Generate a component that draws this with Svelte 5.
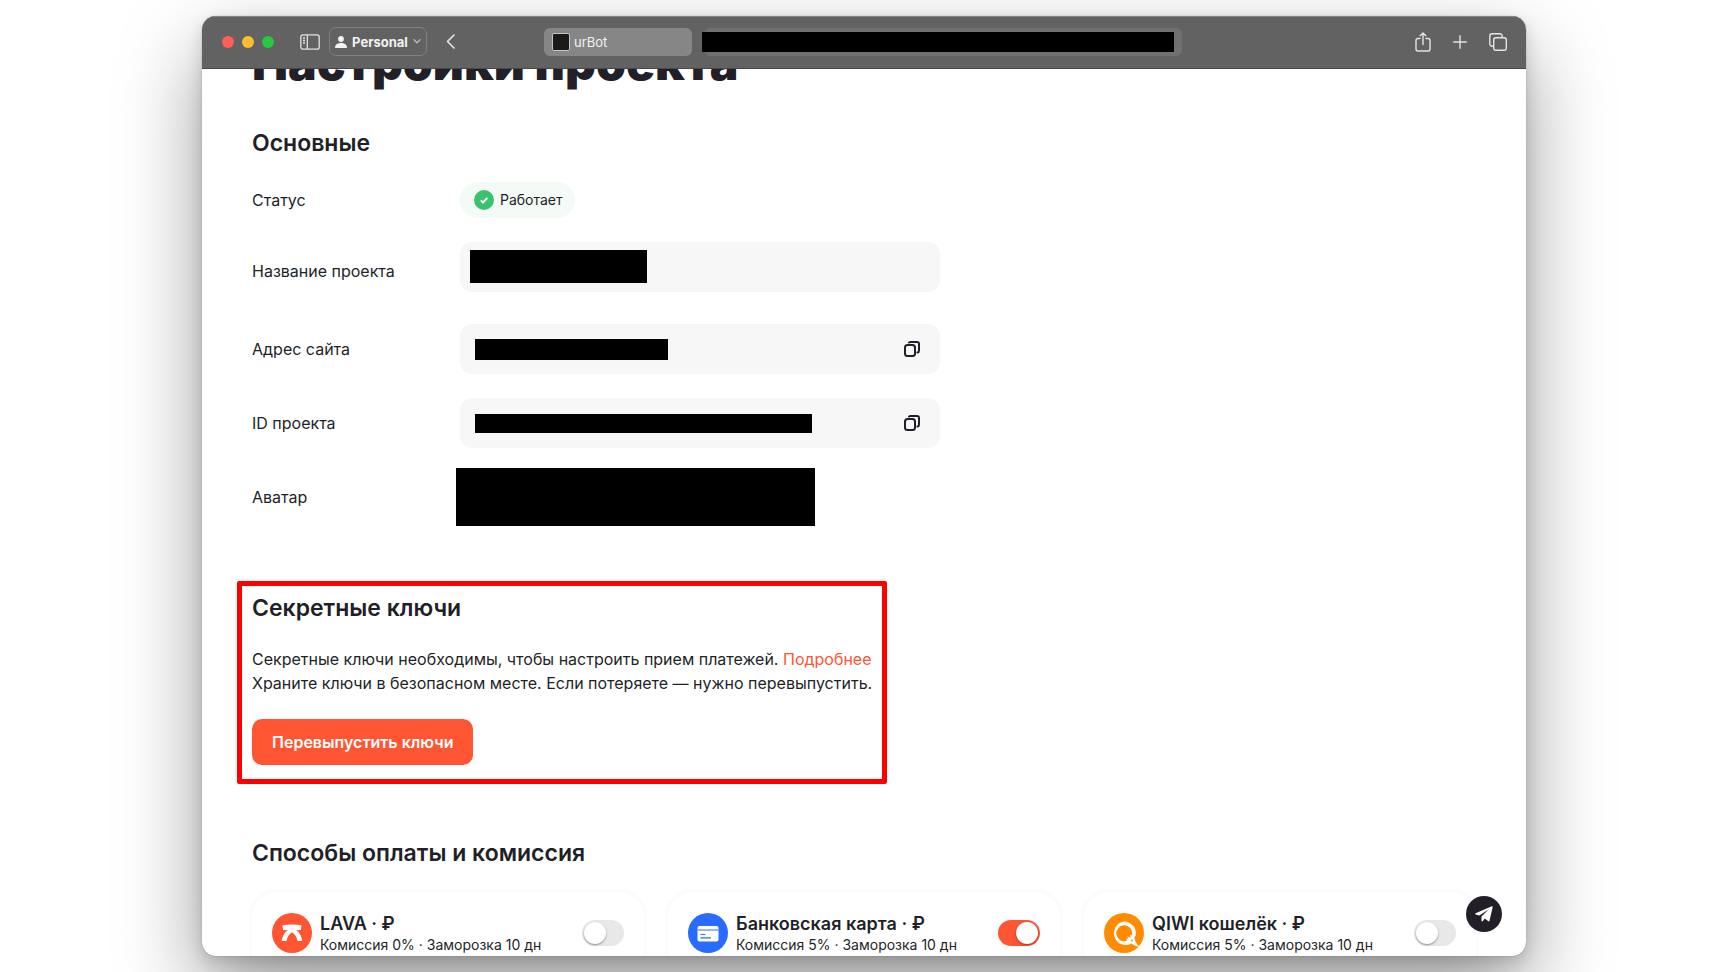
<script lang="ts">
  type Method = {
    id: string;
    title: string;
    fee: number;
    days: number;
    color: string;
    enabled: boolean;
  };

  let methods: Method[] = $state([
    { id: "lava", title: "LAVA · ₽", fee: 0, days: 10, color: "#ff5533", enabled: false },
    { id: "card", title: "Банковская карта · ₽", fee: 5, days: 10, color: "#2a6bff", enabled: true },
    { id: "qiwi", title: "QIWI кошелёк · ₽", fee: 5, days: 10, color: "#ff8c00", enabled: false },
  ]);
</script>

{#snippet copyIcon()}
  <svg width="18" height="18" viewBox="0 0 18 18" fill="none" stroke="currentColor" stroke-width="2">
    <rect x="2" y="5" width="10" height="11" rx="2.500" />
    <path d="M6 2.6c.4-.4.9-.6 1.500-.6H14a2 2 0 0 1 2 2v6.500c0 1-.6 1.900-1.600 2.100" stroke-linecap="round" />
  </svg>
{/snippet}

<div class="desktop">
  <div class="window">
    <header class="toolbar">
      <div class="left">
        <div class="lights">
          <button type="button" class="light close" aria-label="Close"></button>
          <button type="button" class="light minimize" aria-label="Minimize"></button>
          <button type="button" class="light zoom" aria-label="Zoom"></button>
        </div>
        <button type="button" class="tool sidebar" aria-label="Sidebar">
          <svg width="20" height="16" viewBox="0 0 20 16" fill="none" stroke="currentColor" stroke-width="1.300">
            <rect x=".8" y=".8" width="18.400" height="14.400" rx="2.200" />
            <path d="M7.300 1v14M3 4h2M3 6.500h2M3 9h2" />
          </svg>
        </button>
        <button type="button" class="profile">
          <svg width="12" height="12" viewBox="0 0 12 12" fill="currentColor">
            <circle cx="6" cy="3" r="2.900" />
            <path d="M.5 12c-.4 0-.5-.4-.5-.8C.2 8.600 2.700 7 6 7s5.800 1.600 6 4.200c0 .4-.1.8-.5.8z" />
          </svg>
          <span>Personal</span>
          <svg class="dim" width="8" height="5" viewBox="0 0 8 5" fill="none" stroke="currentColor" stroke-width="1.300" stroke-linecap="round">
            <path d="M1 .8l3 3 3-3" />
          </svg>
        </button>
        <button type="button" class="tool" aria-label="Back">
          <svg width="9" height="15" viewBox="0 0 9 15" fill="none" stroke="currentColor" stroke-width="1.600" stroke-linecap="round" stroke-linejoin="round">
            <path d="M8 1L1.500 7.500 8 14" />
          </svg>
        </button>
      </div>
      <div class="tabs">
        <button type="button" class="tab">
          <span class="favicon"></span>
          <span>urBot</span>
        </button>
        <div class="address"><span class="redacted"></span></div>
      </div>
      <div class="right">
        <button type="button" class="tool" aria-label="Share">
          <svg width="16" height="20" viewBox="0 0 16 20" fill="none" stroke="currentColor" stroke-width="1.400" stroke-linecap="round" stroke-linejoin="round">
            <path d="M5 6.500H3a2 2 0 0 0-2 2V17a2 2 0 0 0 2 2h10a2 2 0 0 0 2-2V8.500a2 2 0 0 0-2-2h-2M8 12.500V1.200M5.200 3.800L8 1l2.800 2.800" />
          </svg>
        </button>
        <button type="button" class="tool" aria-label="New tab">
          <svg width="14" height="14" viewBox="0 0 14 14" fill="none" stroke="currentColor" stroke-width="1.400" stroke-linecap="round">
            <path d="M7 .8v12.400M.8 7h12.400" />
          </svg>
        </button>
        <button type="button" class="tool" aria-label="Tab overview">
          <svg width="18" height="18" viewBox="0 0 18 18" fill="none" stroke="currentColor" stroke-width="1.400">
            <rect x="4.700" y="4.700" width="12.600" height="12.600" rx="2.200" />
            <path d="M4.500 13.200H3a2.200 2.200 0 0 1-2.200-2.200V3A2.200 2.200 0 0 1 3 .8h8A2.200 2.200 0 0 1 13.200 3v1.500" />
          </svg>
        </button>
      </div>
    </header>

    <main>
      <h1>Настройки проекта</h1>

      <section>
        <h2>Основные</h2>
        <div class="rows">
          <div class="row">
            <span class="label">Статус</span>
            <span class="status">
              <svg width="20" height="20" viewBox="0 0 20 20" fill="none">
                <circle cx="10" cy="10" r="10" fill="#3ac26e" />
                <path d="M6.800 10.400l2.200 2.100 4.300-4.600" stroke="#fff" stroke-width="2" />
              </svg>
              Работает
            </span>
          </div>
          <div class="row name">
            <label class="label" for="project-name">Название проекта</label>
            <div class="field">
              <input id="project-name" type="text" />
              <span class="mask mask-name"></span>
            </div>
          </div>
          <div class="row">
            <label class="label" for="project-url">Адрес сайта</label>
            <div class="field">
              <input id="project-url" type="text" readonly />
              <span class="mask mask-url"></span>
              <button type="button" class="copy" aria-label="Скопировать адрес">{@render copyIcon()}</button>
            </div>
          </div>
          <div class="row">
            <label class="label" for="project-id">ID проекта</label>
            <div class="field">
              <input id="project-id" type="text" readonly />
              <span class="mask mask-id"></span>
              <button type="button" class="copy" aria-label="Скопировать ID">{@render copyIcon()}</button>
            </div>
          </div>
          <div class="row avatar">
            <span class="label">Аватар</span>
            <div class="avatar-mask"></div>
          </div>
        </div>
      </section>

      <section class="keys">
        <h2>Секретные ключи</h2>
        <p>
          Секретные ключи необходимы, чтобы настроить прием платежей. <a href="#keys">Подробнее</a><br />
          Храните ключи в безопасном месте. Если потеряете — нужно перевыпустить.
        </p>
        <button type="button" class="primary">Перевыпустить ключи</button>
      </section>

      <section>
        <h2>Способы оплаты и комиссия</h2>
        <div class="methods">
          {#each methods as method (method.id)}
            <label class="card">
              <svg class="logo" width="40" height="40" viewBox="0 0 40 40">
                <circle cx="20" cy="20" r="20" fill={method.color} />
                {#if method.id === "lava"}
                  <path fill="#fff" d="M10.500 12.300c6.300-1.100 12.700-1.100 19 0l-.6 4.600-4.500.3c3.200 2.400 5.300 6.300 5.900 10.800h-4.800c-.6-3.700-2.400-6.600-5.500-8.800-3.100 2.200-4.900 5.100-5.500 8.800H9.700c.6-4.500 2.700-8.400 5.900-10.800l-4.500-.3z" />
                {:else if method.id === "card"}
                  <rect x="9.500" y="13" width="21" height="15.500" rx="2" fill="#fff" />
                  <path d="M9.500 17h21M12.500 21.500h5M12.500 24.800h10.500" stroke={method.color} stroke-width="1.200" />
                {:else}
                  <path fill="#fff" fill-rule="evenodd" d="M20 8.500a11.800 11.800 0 0 1 11.600 14.300l-1.400 1.600c1.400 4.800 3 7.100 4.300 8.300.6.7.1 1.200-.7.9-2.600-.8-4.600-2-6.200-3.200A11.800 11.800 0 1 1 20 8.500zM20 12.300a8 8 0 1 0 3.500 15.300l-1.800-2 2.800.7-1.200-2.700 3.400 1.200-.8-3.200 1.900.9A8 8 0 0 0 20 12.300z" />
                  <circle cx="28" cy="27.500" r="1" fill={method.color} />
                {/if}
              </svg>
              <span class="info">
                <strong>{method.title}</strong>
                <span>Комиссия {method.fee}% · Заморозка {method.days} дн</span>
              </span>
              <input type="checkbox" role="switch" bind:checked={method.enabled} />
            </label>
          {/each}
        </div>
      </section>
    </main>

    <a class="support" href="#support" aria-label="Telegram">
      <svg width="18" height="16" viewBox="0 0 18 16" fill="#fff">
        <path d="M16.800.2L.6 7.300c-.6.300-.6.900 0 1.100L4.300 9.600 13.500 3.500 6.500 10.500v4.300c0 .7.7.9 1.100.4l2.100-2.600 3.700 2.700c.5.3 1 .1 1.100-.5L17.700.9c.1-.6-.4-.9-.9-.7z" />
      </svg>
    </a>
  </div>
</div>

<style>
  :global(body) {
    background: #fff;
    overflow: hidden;
  }

  .desktop {
    --text: #221f28;
    --accent: #ff5533;
    --field: #f7f7f7;
    box-sizing: border-box;
    height: 100vh;
    padding: 16px 202px;
    color: var(--text);
    font-family: Inter, "Liberation Sans", sans-serif;
    font-size: 16px;
    line-height: 24px;
  }

  .window {
    position: relative;
    height: 100%;
    display: flex;
    flex-direction: column;
    border-radius: 14px;
    background: #fff;
    box-shadow: 0 0 1px rgba(0, 0, 0, 0.5), 0 6px 16px rgba(0, 0, 0, 0.15), 0 36px 84px rgba(0, 0, 0, 0.4);
    overflow: hidden;
  }

  button {
    padding: 0;
    border: 0;
    background: none;
    color: inherit;
    font: inherit;
    cursor: pointer;
  }

  svg {
    display: block;
    flex: none;
  }

  .toolbar {
    flex: none;
    box-sizing: border-box;
    height: 53px;
    display: grid;
    grid-template-columns: 342px minmax(0, 638px) 1fr;
    align-items: center;
    padding-bottom: 2px;
    border-top: 1px solid #858585;
    border-bottom: 1px solid #484848;
    background: #626262;
    color: #e4e4e4;
  }

  .left,
  .right,
  .lights,
  .tabs {
    display: flex;
    align-items: center;
  }

  .lights {
    gap: 8px;
    padding-left: 20px;
  }

  .light {
    width: 12px;
    height: 12px;
    border-radius: 50%;
  }

  .close {
    background: #ff5f57;
  }

  .minimize {
    background: #febc2e;
  }

  .zoom {
    background: #28c840;
  }

  .sidebar {
    margin-left: 26px;
  }

  .profile {
    box-sizing: border-box;
    width: 98px;
    height: 29px;
    margin: 0 19px 0 9px;
    display: flex;
    align-items: center;
    justify-content: center;
    gap: 5px;
    border: 1px solid #818181;
    border-radius: 7px;
    color: #f2f2f2;
    font-size: 13px;
    font-weight: 700;
    line-height: 16px;
  }

  .dim {
    opacity: 0.6;
  }

  .tabs {
    gap: 12px;
  }

  .tab {
    flex: none;
    width: 148px;
    height: 28px;
    display: flex;
    align-items: center;
    gap: 4px;
    padding: 0 8px;
    border-radius: 6px;
    background: #868686;
    color: #f2f2f2;
    font-size: 13px;
    line-height: 16px;
  }

  .favicon {
    box-sizing: border-box;
    width: 18px;
    height: 18px;
    border: 1px solid #c4c4c4;
    border-radius: 2px;
    background: #1a1a1a;
  }

  .address {
    flex: 1;
    height: 28px;
    display: flex;
    align-items: center;
    padding-right: 8px;
    border-radius: 6px;
    background: #707070;
  }

  .redacted {
    flex: 1;
    height: 20px;
    margin-left: -2px;
    background: #000;
  }

  .right {
    justify-content: flex-end;
    gap: 22px;
    padding-right: 19px;
  }

  main {
    flex: 1;
    min-height: 0;
    padding: 0 50px;
    overflow: hidden;
  }

  /* the page is scrolled, so the title is half under the toolbar */
  h1 {
    margin: -26px 0 44px;
    font-size: 48px;
    font-weight: 900;
    line-height: 40px;
    white-space: nowrap;
  }

  h2 {
    margin: 0 0 23px;
    font-size: 23px;
    font-weight: 600;
    line-height: 32px;
  }

  .rows {
    display: grid;
    gap: 24px;
  }

  .row {
    display: grid;
    grid-template-columns: 208px minmax(0, 480px);
    align-items: center;
  }

  .name {
    height: 58px;
  }

  .name .field {
    align-self: start;
  }

  .status {
    justify-self: start;
    height: 36px;
    display: flex;
    align-items: center;
    gap: 6px;
    padding: 0 12px 0 14px;
    border-radius: 18px;
    background: #f4fbf7;
    font-size: 14px;
  }

  .field {
    position: relative;
    height: 50px;
    display: flex;
    align-items: center;
    border-radius: 12px;
    background: var(--field);
  }

  .field input {
    flex: 1;
    min-width: 0;
    height: 100%;
    padding: 0 16px;
    border: 0;
    border-radius: 12px;
    background: none;
    color: inherit;
    font: inherit;
    outline: none;
    box-sizing: border-box;
  }

  .mask {
    position: absolute;
    background: #000;
  }

  .mask-name {
    left: 10px;
    top: 8px;
    width: 177px;
    height: 33px;
  }

  .mask-url {
    left: 15px;
    top: 15px;
    width: 193px;
    height: 21px;
  }

  .mask-id {
    left: 15px;
    top: 16px;
    width: 337px;
    height: 19px;
  }

  .copy {
    padding: 0 19px;
  }

  .avatar {
    margin-top: -4px;
  }

  .avatar-mask {
    width: 359px;
    height: 58px;
    margin-left: -4px;
    background: #000;
  }

  .keys {
    box-sizing: border-box;
    width: fit-content;
    margin: 55px 0 53px -15px;
    padding: 6px 10px 14px;
    border: 5px solid #f00;
    border-radius: 2px;
  }

  p {
    margin: 0 0 24px;
  }

  a {
    color: var(--accent);
    text-decoration: none;
  }

  .primary {
    display: block;
    height: 46px;
    padding: 0 20px;
    border-radius: 10px;
    background: var(--accent);
    color: #fff;
    font-weight: 600;
  }

  .methods {
    display: grid;
    grid-template-columns: repeat(3, minmax(0, 1fr));
    gap: 24px;
  }

  .card {
    box-sizing: border-box;
    height: 120px;
    display: flex;
    align-items: flex-start;
    gap: 8px;
    padding: 21px 20px;
    border-radius: 24px;
    box-shadow: 0 0 6px rgba(0, 0, 0, 0.05);
    cursor: pointer;
  }

  .info {
    flex: 1;
    min-width: 0;
    display: grid;
    white-space: nowrap;
    font-size: 14px;
    line-height: 20px;
  }

  .info strong {
    font-size: 18px;
    font-weight: 600;
    line-height: 22px;
  }

  .card input {
    appearance: none;
    width: 42px;
    height: 26px;
    margin: 7px 0 0;
    padding: 2px;
    box-sizing: border-box;
    border-radius: 13px;
    background: #e8e8e8;
    cursor: pointer;
  }

  .card input::before {
    content: "";
    display: block;
    width: 22px;
    height: 22px;
    border-radius: 50%;
    background: #fff;
    box-shadow: 0 1px 2px rgba(0, 0, 0, 0.4);
  }

  .card input:checked {
    background: var(--accent);
  }

  .card input:checked::before {
    margin-left: auto;
  }

  .support {
    position: absolute;
    right: 24px;
    bottom: 24px;
    width: 36px;
    height: 36px;
    display: grid;
    place-items: center;
    border-radius: 50%;
    background: var(--text);
  }
</style>
